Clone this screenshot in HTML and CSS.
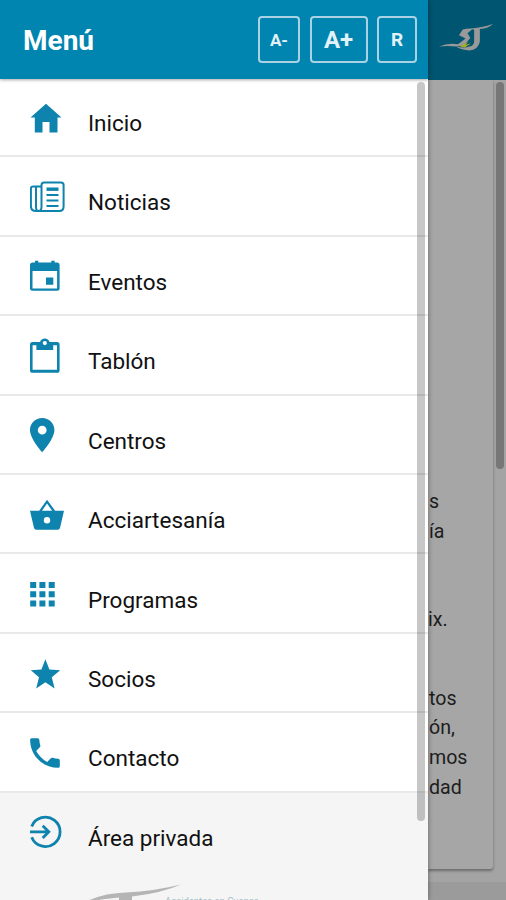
FILE: index.html
```html
<!DOCTYPE html>
<html lang="es">
<head>
  <meta charset="UTF-8" />
  <meta name="viewport" content="width=device-width, initial-scale=1.0"/>
  <title>Menú</title>
  <link rel="stylesheet" href="styles.css">
</head>
<body>

<aside class="drawer">
  <header class="drawer-header">
    <h1>Menú</h1>
    <div class="font-buttons">
      <button class="smaller">A-</button>
      <button class="larger">A+</button>
      <button class="reset">R</button>
    </div>
  </header>

  <nav class="menu">
    <a class="item">
      <svg class="icon" viewBox="0 0 36 36"><path d="M16 3.7L31.5 17.5H27.5V32.5H19.5V22H12.5V32.5H4.8V17.5H.5z"/></svg>
      <span>Inicio</span>
    </a>
    <a class="item">
      <svg class="icon line" viewBox="0 0 36 36">
        <path d="M14 3.5H31Q33.6 3.5 33.6 6V27.5Q33.6 32 29 32H6Q.9 32 .9 27V9.5Q.9 7.5 3 7.5H11.5M14 3.5Q11.5 3.5 11.5 6V28Q11.5 32 8.5 32Q6 32 6 28V8"/>
        <path d="M16.5 10.2H28.5" stroke-width="3.4"/>
        <path d="M16.5 16H28.5M16.5 21.5H28.5M16.5 27H28.5"/>
      </svg>
      <span>Noticias</span>
    </a>
    <a class="item">
      <svg class="icon" viewBox="0 0 36 36"><path fill-rule="evenodd" d="M5 2.8H8.3V4.5H21.3V2.8H24.6V4.5H27Q29.6 4.5 29.6 7V30.3Q29.6 32.8 27 32.8H2.6Q0 32.8 0 30.3V7Q0 4.5 2.6 4.5H5zM2.5 13V30.4H27.1V13zM16 19.5H23.3V26.7H16z"/></svg>
      <span>Eventos</span>
    </a>
    <a class="item">
      <svg class="icon" viewBox="0 0 36 36"><path fill-rule="evenodd" d="M2.6 4H10Q11.2.4 14.8.4T19.6 4H27Q29.6 4 29.6 6.6V32.2Q29.6 34.8 27 34.8H2.6Q0 34.8 0 32.2V6.6Q0 4 2.6 4zM2.6 7.2V31.7H27V7.2H23.2V12H6.4V7.2zM14.8 3A2.1 2.1 0 1 0 14.8 7.2A2.1 2.1 0 1 0 14.8 3z"/></svg>
      <span>Tablón</span>
    </a>
    <a class="item">
      <svg class="icon" viewBox="0 0 36 36"><path fill-rule="evenodd" d="M12.2 1C5.4 1 0 6.2 0 13C0 21.8 12.2 35.2 12.2 35.2S24.4 21.8 24.4 13C24.4 6.2 19 1 12.2 1zM12.2 8.8A4.4 4.4 0 1 1 12.2 17.6A4.4 4.4 0 1 1 12.2 8.8z"/></svg>
      <span>Centros</span>
    </a>
    <a class="item">
      <svg class="icon" viewBox="0 0 36 36"><path fill-rule="evenodd" d="M17 2.8L25.2 13.8H34L30 31Q29.5 32.8 27.8 32.8H6.2Q4.5 32.8 4 31L0 13.8H9.2zM17 6.5L12 13.8H22.2zM17 20A3.2 3.2 0 1 0 17 26.4A3.2 3.2 0 1 0 17 20z"/></svg>
      <span>Acciartesanía</span>
    </a>
    <a class="item">
      <svg class="icon" viewBox="0 0 36 36"><path d="M.2 6h6v6h-6zM9.4 6h6v6h-6zM18.7 6h6v6h-6zM.2 15.2h6v6h-6zM9.4 15.2h6v6h-6zM18.7 15.2h6v6h-6zM.2 24.4h6v6h-6zM9.4 24.4h6v6h-6zM18.7 24.4h6v6h-6z"/></svg>
      <span>Programas</span>
    </a>
    <a class="item">
      <svg class="icon" viewBox="0 0 36 36"><path d="M15.4 3.2L19.4 13.6L30.2 14.2L21.8 21.2L24.6 32.4L15.4 26.2L6.2 32.4L9 21.2L.8 14.2L11.4 13.6z"/></svg>
      <span>Socios</span>
    </a>
    <a class="item">
      <svg class="icon" viewBox="0 0 36 36"><path d="M1.7 3.2H7.8Q9.2 3.2 9.3 4.8Q9.5 8 10.3 10.4Q10.6 11.4 9.8 12.3L6.2 16Q10.3 23.3 17.2 27L20.8 23.3Q21.7 22.5 22.7 22.8Q25.3 23.6 28.2 23.7Q29.8 23.8 29.8 25.3V31.2Q29.8 32.8 28.2 32.8C12.5 32.8 .1 20.3 .1 4.8Q.1 3.2 1.7 3.2z"/></svg>
      <span>Contacto</span>
    </a>
    <a class="item private">
      <svg class="icon login" viewBox="0 0 36 36"><path d="M1.7 12.4A14.7 14.7 0 1 1 1.7 23.2M0 17.8H18.5M12.7 11.7L18.8 17.8L12.7 23.9"/></svg>
      <span>Área privada</span>
    </a>
  </nav>

  <footer class="drawer-footer">
    <svg class="footer-logo" viewBox="0 0 100 17"><path d="M0 17Q18 9 39 8.500Q68 7 94 .5Q75 9 45 12.500V17H32V13.500L14 15.500L10 17z"/></svg>
    <span>Accidentes en Cuenca</span>
  </footer>
  <div class="scrollbar"></div>
</aside>

<main class="page">
  <header class="page-header">
    <svg class="logo" viewBox="0 0 60 32">
      <path class="silver" d="M0 24Q10 19.500 20 21.500L28 15.500L21 12L25 6Q30 4.500 36 5L30 10L33 15L26 23L18 24Q9 22.500 0 24z"/>
      <path class="silver" d="M34 5Q47 4 57 0Q52 5 43 5.500V19Q41 28 32 28Q24 28 18 24Q27 26 32 24Q37 23 37 18V6.500z"/>
      <path class="lime" d="M22 24L31 18.500L28 22L34 20.500L27 25z"/>
    </svg>
  </header>
  <div class="content">
    <article class="card">
      <p>s<br>ía</p>
      <p class="second">ix.</p>
      <p>tos<br>ón,<br>mos<br>dad</p>
    </article>
  </div>
  <div class="page-footer"></div>
  <div class="scrollbar"></div>
</main>

</body>
</html>
```

FILE: styles.css
```css
* {
  box-sizing: border-box;
}
body {
  font-family: Roboto, sans-serif;
  display: flex;
  height: 900px;
  margin: 0;
  overflow: hidden;
  background: #a4a4a4;
}

.drawer {
  position: relative;
  z-index: 1;
  display: flex;
  flex-direction: column;
  flex: none;
  width: 428px;
  height: 900px;
  overflow: hidden;
  background: #f5f5f5;
  box-shadow: 0 0 5px rgba(0, 0, 0, 0.4);
}

.drawer-header {
  position: relative;
  z-index: 1;
  display: flex;
  flex: none;
  justify-content: space-between;
  align-items: center;
  height: 79px;
  padding: 0 11px 0 23px;
  background: #0084b0;
  color: #fff;
  box-shadow: 0 1px 3px rgba(0, 0, 0, 0.35);
}
.drawer-header h1 {
  margin: 2px 0 0;
  font-size: 28px;
  font-weight: 700;
}

.font-buttons {
  display: flex;
  gap: 9.5px;
}
.font-buttons button {
  width: 42px;
  height: 47px;
  padding: 0;
  border: 2px solid #a9d3e4;
  border-radius: 4px;
  background: none;
  color: #e2f2f8;
  font-family: inherit;
  font-size: 17px;
  font-weight: 700;
}
.font-buttons .larger {
  width: 58px;
  font-size: 24px;
}
.font-buttons .reset {
  width: 40px;
  font-size: 19px;
}

.menu {
  flex: none;
  margin-top: -1.2px;
}
.item {
  display: flex;
  align-items: flex-start;
  gap: 22px;
  height: 79.45px;
  padding: 21.7px 0 0 30px;
  border-bottom: 2px solid #e9e9e9;
  background: #fff;
  color: #111;
  font-size: 22.5px;
  line-height: 30px;
}
.item span {
  padding-top: 8.4px;
}
.item.private {
  border: none;
  background: #f5f5f5;
}

.icon {
  flex: none;
  width: 36px;
  height: 36px;
  fill: #0d83ad;
}
.icon.line,
.icon.login {
  fill: none;
  stroke: #0d83ad;
  stroke-width: 2;
}
.icon.login {
  stroke-width: 2.8;
}

.drawer-footer {
  display: flex;
  flex: none;
  align-items: flex-start;
  height: 40px;
  margin-top: 12px;
  padding-left: 87px;
  color: #a4bfc7;
  font-size: 9.5px;
}
.drawer-footer span {
  margin: 11px 0 0 -22px;
  white-space: nowrap;
}
.footer-logo {
  flex: none;
  width: 100px;
  height: 17px;
  fill: #b5b5b5;
}

.scrollbar {
  position: absolute;
  z-index: 2;
  top: 82px;
  right: 3px;
  width: 8px;
  height: 739px;
  border-radius: 4px;
  background: rgba(0, 0, 0, 0.22);
}

.page {
  position: relative;
  display: flex;
  flex: 1;
  flex-direction: column;
  overflow: hidden;
}
.page-header {
  flex: none;
  height: 80px;
  padding: 23px 0 0 11px;
  background: #005570;
}
.logo {
  width: 57px;
  height: 32px;
}
.silver {
  fill: #999;
}
.lime {
  fill: #a7ad20;
}

.content {
  flex: 1;
  padding-right: 13px;
  background: #a4a4a4;
}
.card {
  height: 789px;
  padding: 407px 0 0 1px;
  border-radius: 0 0 3px;
  background: #a6a6a6;
  color: #1d1d1d;
  box-shadow: 0 2px 3px rgba(0, 0, 0, 0.35);
  font-size: 19.6px;
  line-height: 29.6px;
}
.card p {
  margin: 0;
}
.card .second {
  margin: 59px 0 49px -1px;
}
.page-footer {
  flex: none;
  height: 18px;
  background: #9b9b9b;
}
.page .scrollbar {
  right: 2px;
  height: 387px;
  background: #777;
}
```
